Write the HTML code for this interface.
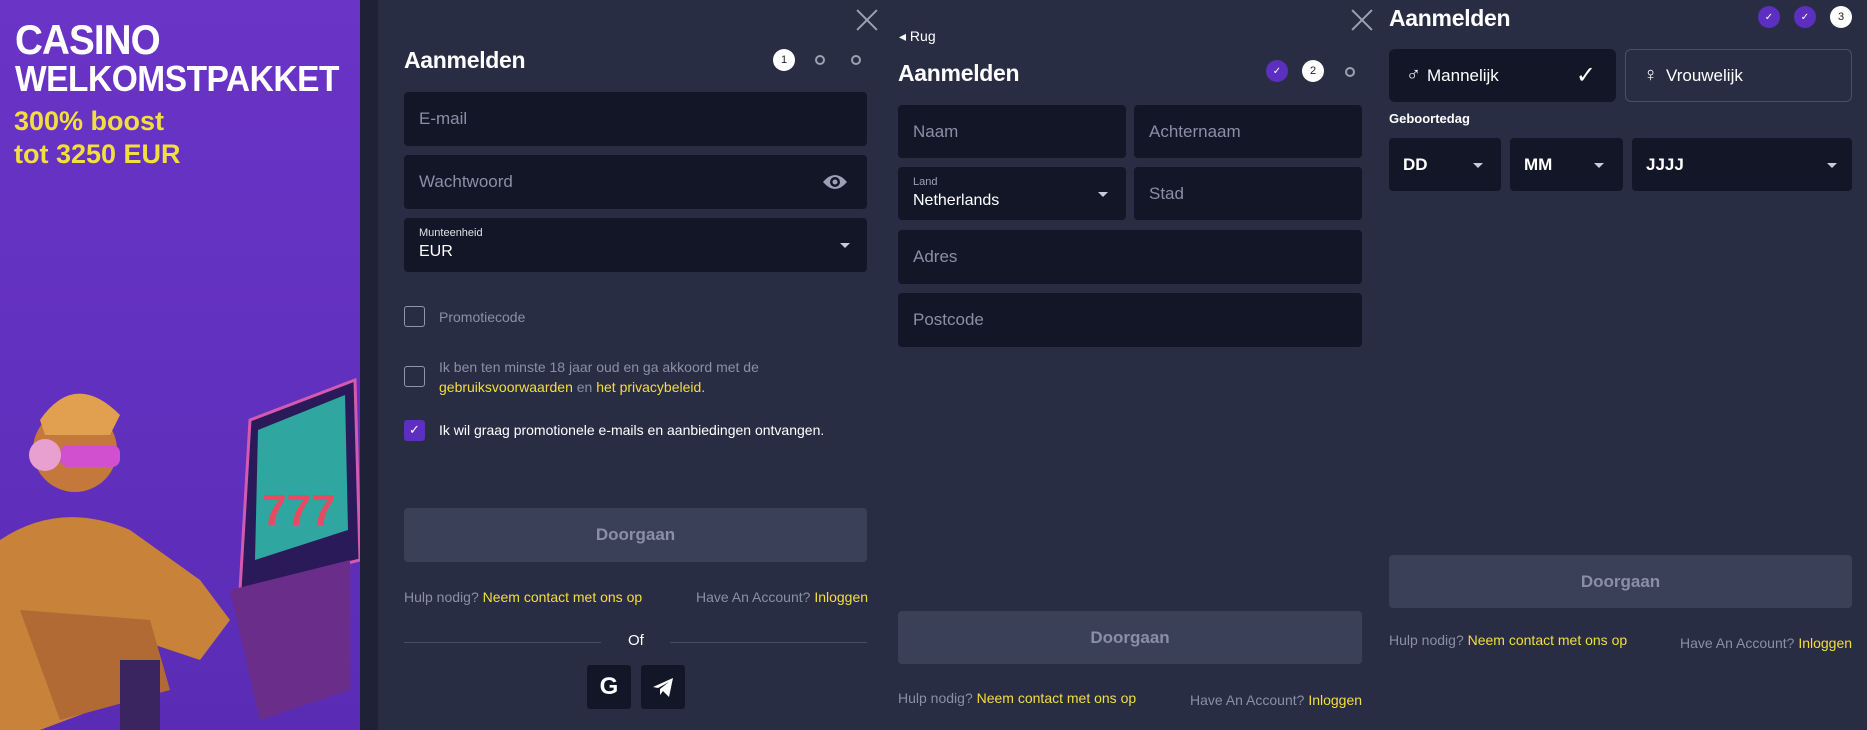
<!DOCTYPE html>
<html><head><meta charset="utf-8"><style>
*{box-sizing:border-box;margin:0;padding:0}
body{width:1867px;height:730px;overflow:hidden;background:#292d44;font-family:"Liberation Sans",sans-serif;position:relative;color:#fff}
.a{position:absolute}
.banner{left:0;top:0;width:360px;height:730px;background:linear-gradient(180deg,#6a34c6 0%,#6331c0 45%,#5a2cb5 100%);overflow:hidden}
.strip{left:360px;top:0;width:18px;height:730px;background:#1f2236}
.in{position:absolute;background:#131627;border-radius:4px;color:#8a8fa6;font-size:17px;padding-left:15px;display:flex;align-items:center}
.title{font-size:23px;font-weight:bold;letter-spacing:-0.3px}
.btn{position:absolute;background:#3b4059;border-radius:4px;color:#8a8fa6;font-size:17px;font-weight:bold;display:flex;align-items:center;justify-content:center}
.help{position:absolute;font-size:14px;color:#8a8fa6}
.y{color:#f2df3f}
.cb{position:absolute;width:21px;height:21px;border:1.5px solid #9095ab;border-radius:3px}
.dot{position:absolute;width:10px;height:10px;border:2px solid #9ca0b4;border-radius:50%}
.num{position:absolute;width:22px;height:22px;border-radius:50%;background:#fff;color:#222;font-size:11px;display:flex;align-items:center;justify-content:center}
.chk{position:absolute;width:22px;height:22px;border-radius:50%;background:#5c2fc0;color:#fff;font-size:10px;display:flex;align-items:center;justify-content:center}
.caret{position:absolute;width:0;height:0;border-left:5px solid transparent;border-right:5px solid transparent;border-top:5px solid #c8cbd8}
.x{position:absolute;width:22px;height:22px}
.x:before,.x:after{content:"";position:absolute;left:10px;top:-3px;width:2px;height:28px;background:#9ca0b4;transform:rotate(45deg)}
.x:after{transform:rotate(-45deg)}
</style></head><body>
<div class="a banner">
 <div class="a" style="left:15px;top:16px;font-size:42px;font-weight:bold;letter-spacing:-1px;transform:scaleX(.92);transform-origin:left">CASINO</div>
 <div class="a" style="left:15px;top:58px;font-size:36px;font-weight:bold;letter-spacing:-0.5px;transform:scaleX(.93);transform-origin:left;white-space:nowrap">WELKOMSTPAKKET</div>
 <div class="a" style="left:14px;top:106px;font-size:27px;font-weight:bold;color:#f2df3f;white-space:nowrap">300% boost</div>
 <div class="a" style="left:14px;top:139px;font-size:27px;font-weight:bold;color:#f2df3f;white-space:nowrap">tot 3250 EUR</div>
 <svg class="a" style="left:0;top:360px" width="360" height="370">
  <path d="M250 60 L355 20 L360 200 L240 230Z" fill="#2a1a5a" stroke="#d45ab0" stroke-width="3"/>
  <path d="M258 70 L345 35 L348 170 L255 200Z" fill="#2fa6a0"/>
  <text x="262" y="165" font-size="44" font-weight="bold" fill="#e84a62" font-family="Liberation Sans">777</text>
  <path d="M230 230 L350 200 L350 330 L260 360 Z" fill="#6a2d8a"/>
  <path d="M0 180 Q60 140 130 170 L200 220 L230 260 L200 300 L140 280 L120 340 L40 370 L0 370 Z" fill="#c9823a"/>
  <circle cx="75" cy="90" r="42" fill="#c4783c"/>
  <path d="M40 60 Q75 10 120 55 L110 75 L45 75Z" fill="#e0a050"/>
  <rect x="60" y="85" width="60" height="22" rx="8" fill="#d050d0"/>
  <circle cx="45" cy="95" r="16" fill="#e8a0d0"/>
  <path d="M20 250 L150 260 L170 330 L60 360Z" fill="#b26a35"/>
  <rect x="120" y="300" width="40" height="70" fill="#3a2560"/>
 </svg>
</div>
<div class="a strip"></div>

<!-- Panel 1 -->
<div class="x" style="left:856px;top:9px"></div>
<div class="a title" style="left:404px;top:47px">Aanmelden</div>
<div class="num" style="left:773px;top:49px">1</div>
<div class="dot" style="left:815px;top:55px"></div>
<div class="dot" style="left:851px;top:55px"></div>
<div class="in" style="left:404px;top:92px;width:463px;height:54px">E-mail</div>
<div class="in" style="left:404px;top:155px;width:463px;height:54px">Wachtwoord
 <svg class="a" style="left:418px;top:17px" width="26" height="20" viewBox="0 0 26 20"><path d="M1 10 Q13 -4 25 10 Q13 24 1 10Z" fill="#9ca0b4"/><circle cx="13" cy="10" r="5" fill="#131627"/><circle cx="13" cy="10" r="2.5" fill="#9ca0b4"/></svg></div>
<div class="in" style="left:404px;top:218px;width:463px;height:54px;display:block;padding-top:9px">
 <div style="font-size:11px;color:#e0e2ea">Munteenheid</div>
 <div style="font-size:16px;color:#fff;margin-top:4px">EUR</div>
 <div class="caret" style="left:436px;top:25px"></div></div>
<div class="cb" style="left:404px;top:306px"></div>
<div class="help" style="left:439px;top:309px">Promotiecode</div>
<div class="cb" style="left:404px;top:366px"></div>
<div class="help" style="left:439px;top:357px;line-height:20px">Ik ben ten minste 18 jaar oud en ga akkoord met de<br><span class="y">gebruiksvoorwaarden</span> en <span class="y">het privacybeleid.</span></div>
<div class="cb" style="left:404px;top:420px;background:#5c2fc0;border-color:#5c2fc0;color:#fff;font-size:13px;text-align:center;line-height:18px">✓</div>
<div class="help" style="left:439px;top:422px;color:#fff">Ik wil graag promotionele e-mails en aanbiedingen ontvangen.</div>
<div class="btn" style="left:404px;top:508px;width:463px;height:54px">Doorgaan</div>
<div class="help" style="left:404px;top:589px">Hulp nodig? <span class="y">Neem contact met ons op</span></div>
<div class="help" style="left:696px;top:589px">Have An Account? <span class="y">Inloggen</span></div>
<div class="a" style="left:404px;top:642px;width:197px;height:1px;background:#474c63"></div>
<div class="a" style="left:670px;top:642px;width:197px;height:1px;background:#474c63"></div>
<div class="a" style="left:628px;top:632px;font-size:15px">Of</div>
<div class="a" style="left:587px;top:665px;width:44px;height:44px;background:#131627;border-radius:3px;font-size:24px;font-weight:bold;text-align:center;line-height:44px">G</div>
<div class="a" style="left:641px;top:665px;width:44px;height:44px;background:#131627;border-radius:3px">
 <svg width="44" height="44" viewBox="0 0 44 44"><path d="M12 22 L32 13 L28 32 L22 26 L19 30 L19 24 L28 17 L17 23Z" fill="#fff"/></svg></div>

<!-- Panel 2 -->
<div class="x" style="left:1351px;top:9px"></div>
<div class="a" style="left:899px;top:28px;font-size:14px">◂ Rug</div>
<div class="a title" style="left:898px;top:60px">Aanmelden</div>
<div class="chk" style="left:1266px;top:60px">✓</div>
<div class="num" style="left:1302px;top:60px">2</div>
<div class="dot" style="left:1345px;top:67px"></div>
<div class="in" style="left:898px;top:105px;width:228px;height:53px">Naam</div>
<div class="in" style="left:1134px;top:105px;width:228px;height:53px">Achternaam</div>
<div class="in" style="left:898px;top:167px;width:228px;height:53px;display:block;padding-top:9px">
 <div style="font-size:11px;color:#9ca0b4">Land</div>
 <div style="font-size:16px;color:#fff;margin-top:4px">Netherlands</div>
 <div class="caret" style="left:200px;top:25px"></div></div>
<div class="in" style="left:1134px;top:167px;width:228px;height:53px">Stad</div>
<div class="in" style="left:898px;top:230px;width:464px;height:54px">Adres</div>
<div class="in" style="left:898px;top:293px;width:464px;height:54px">Postcode</div>
<div class="btn" style="left:898px;top:611px;width:464px;height:53px">Doorgaan</div>
<div class="help" style="left:898px;top:690px">Hulp nodig? <span class="y">Neem contact met ons op</span></div>
<div class="help" style="left:1190px;top:692px">Have An Account? <span class="y">Inloggen</span></div>

<!-- Panel 3 -->
<div class="a title" style="left:1389px;top:5px">Aanmelden</div>
<div class="chk" style="left:1758px;top:6px">✓</div>
<div class="chk" style="left:1794px;top:6px">✓</div>
<div class="num" style="left:1830px;top:6px">3</div>
<div class="in" style="left:1389px;top:49px;width:227px;height:53px;color:#fff;border-radius:6px;padding-left:17px">
 <span style="font-size:20px;margin-right:6px">♂</span>Mannelijk<span style="position:absolute;right:20px;font-size:24px">✓</span></div>
<div class="in" style="left:1625px;top:49px;width:227px;height:53px;color:#fff;background:transparent;border:1px solid #4a4f66;border-radius:6px;padding-left:17px">
 <span style="font-size:20px;margin-right:8px">♀</span>Vrouwelijk</div>
<div class="a" style="left:1389px;top:111px;font-size:13px;font-weight:bold">Geboortedag</div>
<div class="in" style="left:1389px;top:138px;width:112px;height:53px;color:#fff;font-weight:bold;padding-left:14px">DD<div class="caret" style="left:84px;top:25px"></div></div>
<div class="in" style="left:1510px;top:138px;width:113px;height:53px;color:#fff;font-weight:bold;padding-left:14px">MM<div class="caret" style="left:84px;top:25px"></div></div>
<div class="in" style="left:1632px;top:138px;width:220px;height:53px;color:#fff;font-weight:bold;padding-left:14px">JJJJ<div class="caret" style="left:195px;top:25px"></div></div>
<div class="btn" style="left:1389px;top:555px;width:463px;height:53px">Doorgaan</div>
<div class="help" style="left:1389px;top:632px">Hulp nodig? <span class="y">Neem contact met ons op</span></div>
<div class="help" style="left:1680px;top:635px">Have An Account? <span class="y">Inloggen</span></div>
</body></html>
